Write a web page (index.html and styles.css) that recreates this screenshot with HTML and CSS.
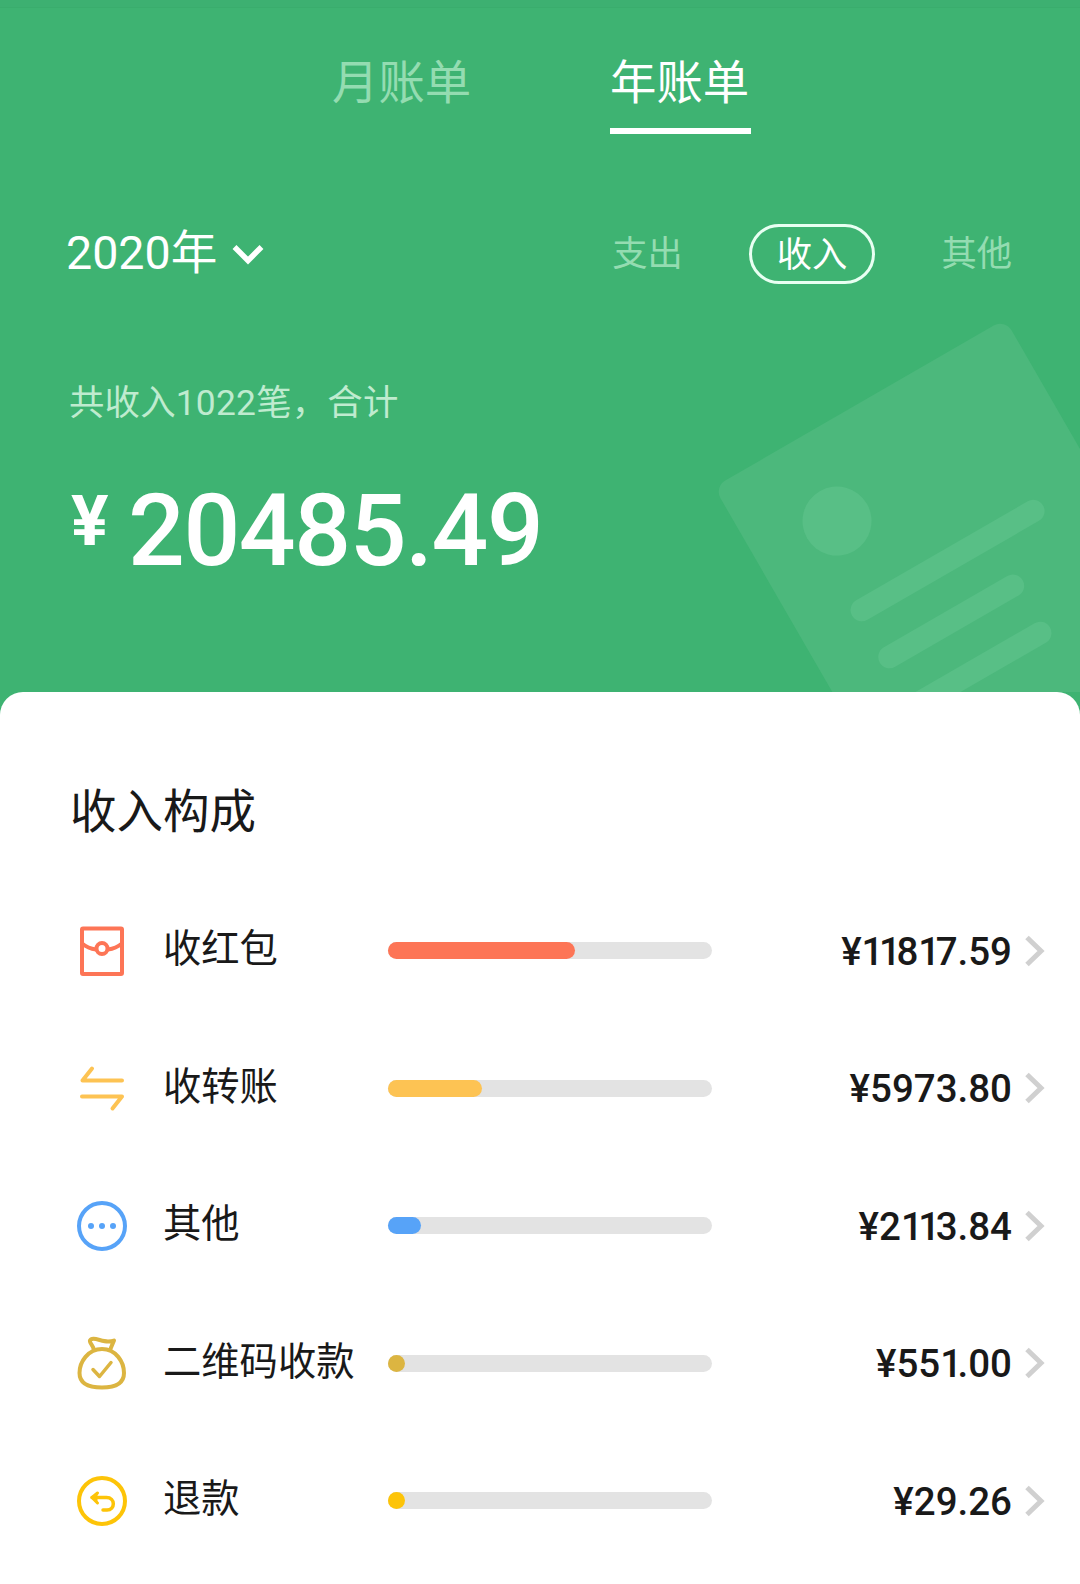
FILE: index.html
```html
<!DOCTYPE html>
<html lang="zh-CN">
<head>
    <meta charset="UTF-8">
    <meta name="viewport" content="width=device-width, initial-scale=1.0">
    <title>年账单</title>
    <link rel="stylesheet" href="styles.css">
</head>
<body>
    <header class="header">
        <svg class="header-art" viewBox="0 0 400 392">
            <g transform="translate(34 187) rotate(-30)">
                <rect class="paper" x="0" y="0" width="336" height="480" rx="13"/>
                <circle class="shape" cx="89.5" cy="91" r="34.5"/>
                <path class="line" d="M66.500 180.500H264.500M67 235H209.500M67 289.500H209.500"/>
            </g>
        </svg>

        <nav class="tabs">
            <a class="tab">月账单</a>
            <a class="tab active">年账单</a>
        </nav>

        <div class="toolbar">
            <div class="year">
                <span>2020年</span>
                <svg class="year-arrow" viewBox="0 0 32 22"><path d="M2.500 4L16 17.500L29.500 4"/></svg>
            </div>
            <div class="filters">
                <span class="filter">支出</span>
                <span class="filter selected">收入</span>
                <span class="filter">其他</span>
            </div>
        </div>

        <p class="summary">共收入1022笔，合计</p>
        <div class="total">
            <span class="currency">¥</span>
            <span class="total-number">20485.49</span>
        </div>
    </header>

    <main class="card">
        <h1>收入构成</h1>

        <ul class="list">
            <li class="row">
                <svg class="icon red" viewBox="0 0 60 60">
                    <rect x="10" y="7.500" width="40" height="45.500" rx="1"/>
                    <path d="M10 22.500Q16 27.500 24 28.500M36 28.500Q44 27.500 50 22.500"/>
                    <circle cx="30" cy="27.500" r="5.500"/>
                </svg>
                <span class="label">收红包</span>
                <div class="bar"><div class="fill red" style="width: 57.7%"></div></div>
                <span class="amount">¥<i>1</i><i>1</i>8<i>1</i>7.59</span>
                <svg class="arrow" viewBox="0 0 20 32"><path d="M2 2.500L16 16L2 29.500"/></svg>
            </li>
            <li class="row">
                <svg class="icon orange" viewBox="0 0 60 60">
                    <path d="M50 22.500H10.500L20 10.500M10 38.500H50L40.500 50.500"/>
                </svg>
                <span class="label">收转账</span>
                <div class="bar"><div class="fill orange" style="width: 28.9%"></div></div>
                <span class="amount">¥5973.80</span>
                <svg class="arrow" viewBox="0 0 20 32"><path d="M2 2.500L16 16L2 29.500"/></svg>
            </li>
            <li class="row">
                <svg class="icon blue" viewBox="0 0 60 60">
                    <circle cx="30" cy="30" r="23"/>
                    <g class="dots"><circle cx="19" cy="30" r="3"/><circle cx="30" cy="30" r="3"/><circle cx="41" cy="30" r="3"/></g>
                </svg>
                <span class="label">其他</span>
                <div class="bar"><div class="fill blue" style="width: 10.3%"></div></div>
                <span class="amount">¥2<i>1</i><i>1</i>3.84</span>
                <svg class="arrow" viewBox="0 0 20 32"><path d="M2 2.500L16 16L2 29.500"/></svg>
            </li>
            <li class="row">
                <svg class="icon gold" viewBox="0 0 60 60">
                    <path d="M22 17C21 12 17 9.500 18 7.500C20 3 29 8.500 36 8.500Q40 8.500 42 7.500L38 17"/>
                    <path d="M30 16C16 16 7.500 29 7.500 40C7.500 51 17 54.500 30 54.500S52 51 52 40C52 29 44 16 30 16Z"/>
                    <path class="thin" d="M21 36.500L27.500 43.500L39 29.500"/>
                </svg>
                <span class="label">二维码收款</span>
                <div class="bar"><div class="fill gold" style="width: 2.7%"></div></div>
                <span class="amount">¥55<i>1</i>.00</span>
                <svg class="arrow" viewBox="0 0 20 32"><path d="M2 2.500L16 16L2 29.500"/></svg>
            </li>
            <li class="row">
                <svg class="icon yellow" viewBox="0 0 60 60">
                    <circle cx="30" cy="30" r="23"/>
                    <path d="M25.500 22L20 26.500L25.500 32" fill="currentColor" stroke-width="3"/>
                    <path class="thin" d="M20 26.500H34.500C43.500 26.500 43.500 39 35 39H31"/>
                </svg>
                <span class="label">退款</span>
                <div class="bar"><div class="fill yellow" style="width: 0.1%"></div></div>
                <span class="amount">¥29.26</span>
                <svg class="arrow" viewBox="0 0 20 32"><path d="M2 2.500L16 16L2 29.500"/></svg>
            </li>
        </ul>
    </main>
</body>
</html>
```
FILE: styles.css
```css
* {
    margin: 0;
    padding: 0;
    box-sizing: border-box;
}

body {
    width: 1080px;
    height: 1584px;
    overflow: hidden;
    background-color: #3eb372;
    font-family: Roboto, "Noto Sans CJK SC", sans-serif;
    color: #191919;
}

.header {
    position: relative;
    height: 692px;
    padding-top: 48px;
    color: #fff;
    background: linear-gradient(#3db071 7px, #3aad6d 7px, #3aad6d 8px, #3eb372 8px);
}

.header-art {
    position: absolute;
    right: 0;
    bottom: 0;
    width: 400px;
    height: 392px;
}

.paper {
    fill: #4cb87c;
}

.shape {
    fill: #58bf86;
}

.line {
    fill: none;
    stroke: #58bf86;
    stroke-width: 22.5;
    stroke-linecap: round;
}

.tabs {
    position: relative;
    display: flex;
    gap: 137px;
    margin-left: 332px;
}

.tab {
    width: 141px;
    height: 86px;
    font-size: 46.4px;
    line-height: 70px;
    color: #94dcb1;
}

.tab.active {
    color: #fff;
    border-bottom: 6px solid #fff;
}

.toolbar {
    position: relative;
    display: flex;
    justify-content: space-between;
    align-items: center;
    height: 60px;
    margin-top: 90px;
    padding: 0 68px 0 66px;
}

.year {
    display: flex;
    align-items: center;
    gap: 15px;
    font-size: 46.6px;
    line-height: 60px;
}

.year span {
    margin-top: -3px;
}

.year-arrow {
    width: 32px;
    height: 22px;
    fill: none;
    stroke: #fff;
    stroke-width: 5.5;
}

.filters {
    display: flex;
    align-items: center;
    gap: 66px;
    font-size: 35.3px;
    line-height: 56px;
    color: #94dcb1;
}

.filter.selected {
    height: 60px;
    padding: 0 25px;
    border: 3px solid #e8fff2;
    border-radius: 30px;
    color: #fff;
}

.summary {
    position: relative;
    margin: 93px 0 0 69px;
    font-size: 35.4px;
    line-height: 52px;
    letter-spacing: 0.2px;
    color: #bfebcf;
}

.total {
    position: relative;
    display: flex;
    align-items: flex-start;
    margin: 43px 0 0 71px;
    font-weight: 500;
}

.currency {
    width: 57px;
    padding-top: 8px;
    font-size: 70px;
    font-weight: 700;
    line-height: 82px;
}

.total-number {
    font-size: 100px;
    line-height: 118px;
    letter-spacing: -1.4px;
}

.card {
    position: relative;
    height: 892px;
    padding-top: 85px;
    background-color: #fff;
    border-radius: 23px 23px 0 0;
}

h1 {
    margin-left: 70px;
    font-size: 46.5px;
    font-weight: 400;
    line-height: 70px;
}

.list {
    margin-top: 35px;
    list-style: none;
}

.row {
    display: flex;
    align-items: center;
    height: 137.5px;
    padding: 0 35px 0 72px;
}

.icon {
    width: 60px;
    height: 60px;
    fill: none;
    stroke: currentColor;
    stroke-width: 4;
    stroke-linecap: round;
    stroke-linejoin: round;
}

.thin {
    stroke-width: 3.5;
}

.dots {
    fill: currentColor;
    stroke: none;
}

.label {
    width: 225px;
    margin: -3px 0 0 31px;
    font-size: 38.3px;
    line-height: 56px;
    white-space: nowrap;
}

.bar {
    width: 324px;
    height: 17px;
    border-radius: 9px;
    background-color: #e3e3e3;
}

.fill {
    min-width: 17px;
    height: 100%;
    border-radius: 9px;
    background-color: currentColor;
}

.amount {
    margin: 2px 0 0 auto;
    font-size: 38.5px;
    font-weight: 500;
    line-height: 46px;
}

/* tighter "1" */
.amount i {
    font-style: normal;
    letter-spacing: -4.5px;
}

.arrow {
    width: 20px;
    height: 32px;
    margin-left: 13px;
    fill: none;
    stroke: #d0d0d0;
    stroke-width: 5;
}

.red { color: #fd7556; }
.orange { color: #fdc353; }
.blue { color: #57a3f8; }
.gold { color: #dcb541; }
.yellow { color: #fdc408; }
```
